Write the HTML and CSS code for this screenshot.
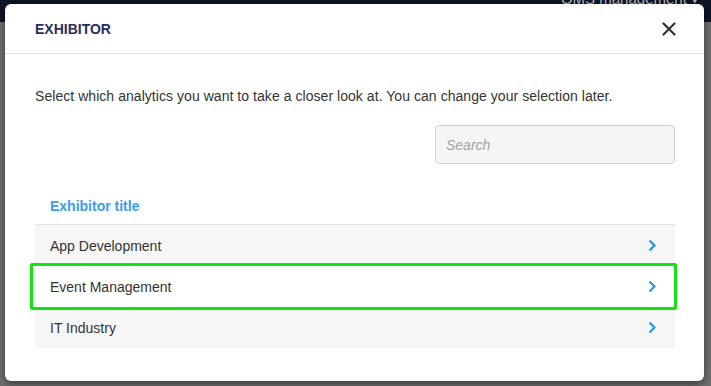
FILE: index.html
```html
<!DOCTYPE html>
<html>
<head>
    <title>Exhibitor</title>
    <link rel="stylesheet" href="styles.css">
</head>
<body>
    <div class="topbar">
        <span class="user">OMS management &#9662;</span>
    </div>
    <div class="page"></div>

    <div class="modal">
        <div class="modal-header">
            <h2>EXHIBITOR</h2>
            <button class="close" aria-label="Close">
                <svg width="14" height="14" viewBox="0 0 14 14">
                    <path d="M1.5 1.5 L12.5 12.5 M12.5 1.5 L1.5 12.5" stroke="#333" stroke-width="2.2" stroke-linecap="round"/>
                </svg>
            </button>
        </div>
        <div class="modal-body">
            <p class="intro">Select which analytics you want to take a closer look at. You can change your selection later.</p>
            <div class="search-row">
                <input type="text" class="search" placeholder="Search">
            </div>
            <div class="list">
                <div class="list-head">Exhibitor title</div>
                <div class="item">
                    <span>App Development</span>
                    <svg class="chev" width="8" height="13" viewBox="0 0 8 13"><path d="M1.5 1.5 L6.5 6.5 L1.5 11.5" fill="none" stroke="#2d93ea" stroke-width="2.2"/></svg>
                </div>
                <div class="item selected">
                    <span>Event Management</span>
                    <svg class="chev" width="8" height="13" viewBox="0 0 8 13"><path d="M1.5 1.5 L6.5 6.5 L1.5 11.5" fill="none" stroke="#2d93ea" stroke-width="2.2"/></svg>
                </div>
                <div class="item">
                    <span>IT Industry</span>
                    <svg class="chev" width="8" height="13" viewBox="0 0 8 13"><path d="M1.5 1.5 L6.5 6.5 L1.5 11.5" fill="none" stroke="#2d93ea" stroke-width="2.2"/></svg>
                </div>
            </div>
        </div>
    </div>
</body>
</html>
```

FILE: styles.css
```css
body {
    margin: 0;
    font-family: "Liberation Sans", Arial, sans-serif;
    background-color: #6e6e6e;
    height: 386px;
    overflow: hidden;
}
.topbar {
    height: 22px;
    background-color: #0e1525;
    display: flex;
    justify-content: flex-end;
    align-items: flex-start;
    padding-right: 12px;
    overflow: hidden;
}
.user {
    color: #b4b8c0;
    font-size: 15px;
    line-height: 15px;
    margin-top: -9px;
}
.page {
    height: 364px;
    background-color: #707070;
}
.modal {
    position: absolute;
    left: 5px;
    top: 4px;
    width: 699px;
    height: 377px;
    background-color: white;
    border-radius: 6px;
    box-shadow: 0 3px 9px rgba(0,0,0,0.5);
    box-sizing: border-box;
}
.modal-header {
    height: 49px;
    border-bottom: 1px solid #e3e3e3;
    display: flex;
    align-items: center;
    justify-content: space-between;
    padding: 0 28px 0 30px;
}
.modal-header h2 {
    margin: 0;
    font-size: 14px;
    font-weight: bold;
    color: #2b2e5c;
}
.close {
    border: none;
    background: none;
    padding: 0;
    width: 14px;
    height: 14px;
    cursor: pointer;
    display: flex;
    margin-top: 1px;
}
.modal-body {
    padding: 34px 29px 0 30px;
}
.intro {
    margin: 0;
    font-size: 14px;
    line-height: 16px;
    color: #333;
    letter-spacing: 0.05px;
}
.search-row {
    display: flex;
    justify-content: flex-end;
    margin-top: 21px;
}
.search {
    width: 240px;
    height: 39px;
    box-sizing: border-box;
    border: 1px solid #cfcfcf;
    border-radius: 4px;
    background-color: #f5f5f5;
    padding: 0 10px;
    font-family: "Liberation Sans", Arial, sans-serif;
    font-size: 14px;
}
.search::placeholder {
    color: #a3a3a3;
    font-style: italic;
}
.list {
    margin-top: 22px;
}
.list-head {
    height: 39px;
    box-sizing: border-box;
    padding: 12px 15px 0;
    font-size: 14px;
    font-weight: bold;
    color: #3a9cea;
    border-bottom: 1px solid #e3e3e3;
}
.item {
    position: relative;
    height: 41px;
    display: flex;
    align-items: center;
    justify-content: space-between;
    padding: 0 19px 0 15px;
    background-color: #f6f6f6;
    font-size: 14px;
    color: #333;
}
.item.selected {
    background-color: white;
    z-index: 1;
}
.item.selected::after {
    content: "";
    position: absolute;
    left: -5px;
    right: -2px;
    top: -3px;
    bottom: -3px;
    border: 3px solid #13e313;
    border-radius: 2px;
}
```
